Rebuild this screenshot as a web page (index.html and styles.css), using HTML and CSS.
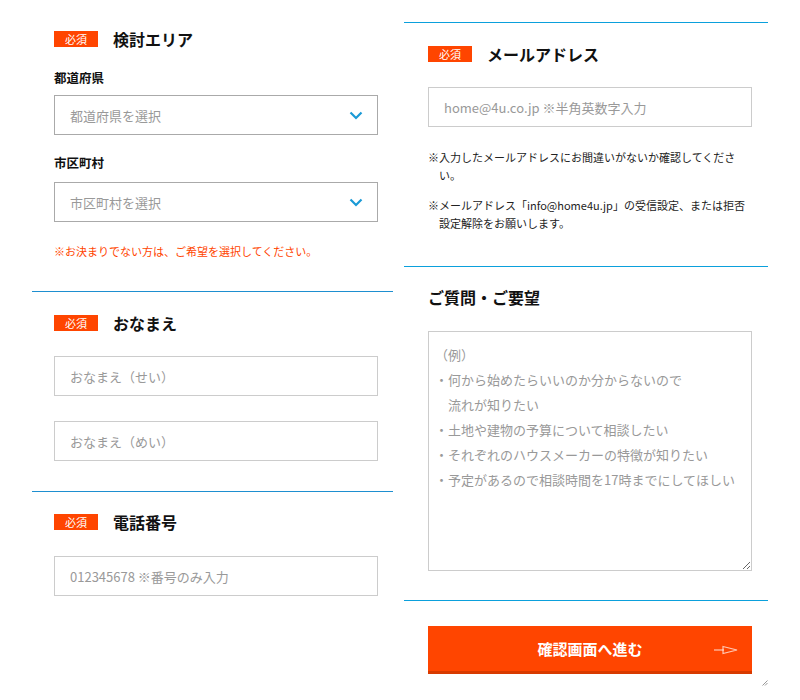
FILE: index.html
```html
<!DOCTYPE html>
<html lang="ja">
<head>
    <meta charset="UTF-8">
    <meta name="viewport" content="width=device-width, initial-scale=1.0">
    <title>お問い合わせフォーム</title>
    <link rel="stylesheet" href="styles.css">
</head>
<body>
    <div class="form-wrap">
        <!-- left column -->
        <div class="col col-left">
            <div class="section section-area">
                <div class="section-head">
                    <span class="badge">必須</span>
                    <h2 class="section-title">検討エリア</h2>
                </div>
                <div class="field-label label-first">都道府県</div>
                <div class="select-box">
                    <span class="placeholder">都道府県を選択</span>
                    <svg class="chevron" width="14" height="9" viewBox="0 0 14 9"><polyline points="1.5,1.5 7,7 12.5,1.5" fill="none" stroke="#1a9ad6" stroke-width="2.2"/></svg>
                </div>
                <div class="field-label label-second">市区町村</div>
                <div class="select-box select-city">
                    <span class="placeholder">市区町村を選択</span>
                    <svg class="chevron" width="14" height="9" viewBox="0 0 14 9"><polyline points="1.5,1.5 7,7 12.5,1.5" fill="none" stroke="#1a9ad6" stroke-width="2.2"/></svg>
                </div>
                <p class="area-note">※お決まりでない方は、ご希望を選択してください。</p>
            </div>

            <div class="section section-name">
                <div class="section-head">
                    <span class="badge">必須</span>
                    <h2 class="section-title">おなまえ</h2>
                </div>
                <input class="text-input input-first" type="text" placeholder="おなまえ（せい）">
                <input class="text-input input-second" type="text" placeholder="おなまえ（めい）">
            </div>

            <div class="section section-tel">
                <div class="section-head">
                    <span class="badge">必須</span>
                    <h2 class="section-title">電話番号</h2>
                </div>
                <input class="text-input input-first" type="text" placeholder="012345678 ※番号のみ入力">
            </div>
        </div>

        <!-- right column -->
        <div class="col col-right">
            <div class="section section-mail">
                <div class="section-head">
                    <span class="badge">必須</span>
                    <h2 class="section-title">メールアドレス</h2>
                </div>
                <input class="text-input input-first" type="text" placeholder="home@4u.co.jp ※半角英数字入力">
                <p class="mail-note">※入力したメールアドレスにお間違いがないか確認してくださ<br>い。</p>
                <p class="mail-note note-second">※メールアドレス「info@home4u.jp」の受信設定、または拒否<br>設定解除をお願いします。</p>
            </div>

            <div class="section section-request">
                <div class="section-head">
                    <h2 class="section-title">ご質問・ご要望</h2>
                </div>
                <textarea class="request-text" placeholder="（例）&#10;・何から始めたらいいのか分からないので&#10;　流れが知りたい&#10;・土地や建物の予算について相談したい&#10;・それぞれのハウスメーカーの特徴が知りたい&#10;・予定があるので相談時間を17時までにしてほしい"></textarea>
            </div>

            <div class="section section-submit">
                <button class="submit-button" type="button">
                    確認画面へ進む
                    <svg class="submit-arrow" width="24" height="10" viewBox="0 0 24 10"><line x1="0" y1="5" x2="10" y2="5" stroke="rgba(255,255,255,0.7)" stroke-width="1.2"/><polygon points="9,1.5 23,5 9,8.5" fill="none" stroke="rgba(255,255,255,0.7)" stroke-width="1.2"/></svg>
                </button>
                <div class="grip">
                    <svg width="6" height="6" viewBox="0 0 6 6"><line x1="0.5" y1="5.5" x2="5.5" y2="0.5" stroke="#999" stroke-width="1"/><line x1="3" y1="5.5" x2="5.5" y2="3" stroke="#999" stroke-width="1"/></svg>
                </div>
            </div>
        </div>
    </div>
</body>
</html>
```

FILE: styles.css
```css
/* entry form, two columns */
body {
    font-family: "Noto Sans CJK JP", "Noto Sans", sans-serif;
    background-color: #fff;
    color: #111;
    margin: 0;
    padding: 0;
}

.form-wrap {
    display: flex;
    gap: 11px;
    padding-left: 32px;
}

.col-left {
    width: 361px;
}

.col-right {
    width: 364px;
    margin-top: 22px;
}

.section {
    padding-left: 22px;
    padding-right: 15px;
}

.col-right .section {
    padding-left: 24px;
    padding-right: 16px;
    border-top: 1px solid #0ba0dc;
}

.section-area {
    padding-top: 28px;
    padding-bottom: 31px;
}

.section-name {
    border-top: 1px solid #1e8fd0;
    padding-top: 20px;
    padding-bottom: 30px;
}

.section-tel {
    border-top: 1px solid #1e8fd0;
    padding-top: 19px;
}

.section-head {
    display: flex;
    align-items: center;
    height: 22px;
}

.badge {
    display: inline-block;
    width: 44px;
    height: 16px;
    line-height: 16px;
    background-color: #ff4500;
    color: #fff;
    font-size: 11px;
    text-align: center;
    margin-right: 15px;
}

.section-title {
    margin: 0;
    font-size: 16px;
    font-weight: bold;
    line-height: 22px;
}

.field-label {
    font-size: 12.5px;
    font-weight: bold;
    line-height: 20px;
}

.label-first {
    margin-top: 18px;
}

.label-second {
    margin-top: 18px;
}

.select-box {
    display: flex;
    align-items: center;
    justify-content: space-between;
    box-sizing: border-box;
    height: 40px;
    margin-top: 7px;
    padding: 0 14px 0 15px;
    border: 1px solid #aaa;
}

.select-city {
    margin-top: 9px;
}

.placeholder {
    font-size: 13px;
    color: #999;
}

.area-note {
    margin: 20px 0 0;
    font-size: 11px;
    line-height: 18px;
    color: #ff4500;
}

.text-input {
    display: block;
    box-sizing: border-box;
    width: 100%;
    height: 40px;
    padding: 0 15px;
    border: 1px solid #ccc;
    border-radius: 0;
    font-family: inherit;
    font-size: 13px;
    outline: none;
}

.text-input::placeholder {
    color: #999;
}

.input-first {
    margin-top: 22px;
}

.input-second {
    margin-top: 25px;
}

.section-tel .input-first {
    margin-top: 23px;
}

.section-mail {
    padding-top: 20px;
    padding-bottom: 34px;
}

.mail-note {
    margin: 21px 0 0;
    padding-left: 11px;
    text-indent: -11px;
    font-size: 11px;
    line-height: 18px;
    color: #222;
    white-space: nowrap;
}

.note-second {
    margin-top: 12px;
}

.section-request {
    padding-top: 19px;
    padding-bottom: 29px;
}

.request-text {
    display: block;
    box-sizing: border-box;
    width: 100%;
    height: 240px;
    margin-top: 23px;
    padding: 10px 0 0 6px;
    border: 1px solid #ccc;
    border-radius: 0;
    font-family: inherit;
    font-size: 13px;
    line-height: 25px;
    outline: none;
}

.request-text::placeholder {
    color: #999;
}

.section-submit {
    padding-top: 25px;
}

.submit-button {
    display: flex;
    align-items: center;
    justify-content: center;
    position: relative;
    width: 100%;
    height: 48px;
    border: none;
    border-bottom: 3px solid #d83a00;
    background-color: #ff4500;
    color: #fff;
    font-family: inherit;
    font-size: 15px;
    font-weight: bold;
    cursor: pointer;
}

.submit-arrow {
    position: absolute;
    right: 14px;
    top: 19px;
}

.grip {
    display: flex;
    justify-content: flex-end;
    margin-right: -16px;
    margin-top: 6px;
    line-height: 0;
}
```
